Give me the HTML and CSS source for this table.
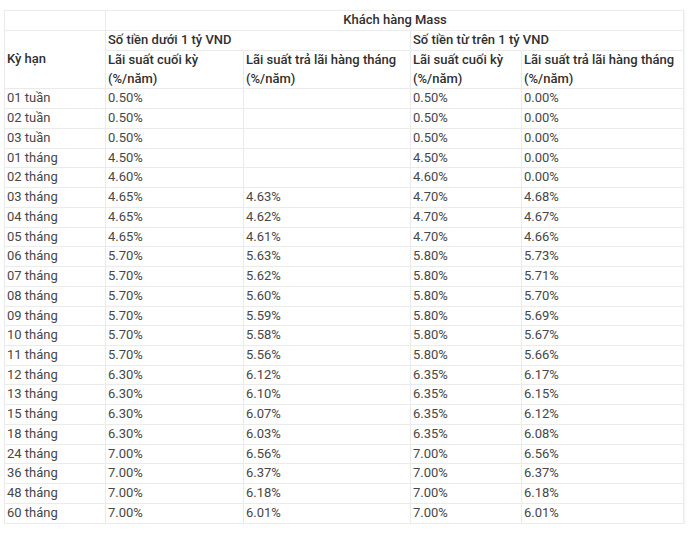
FILE: index.html
```html
<!DOCTYPE html>
<html lang="vi">
<head>
<meta charset="utf-8">
<title>Lãi suất</title>
<link rel="stylesheet" href="styles.css">
</head>
<body>
<table class="rates">
  <colgroup>
    <col class="c1"><col class="c2"><col class="c3"><col class="c4"><col class="c5">
  </colgroup>
  <thead>
    <tr class="h1">
      <th></th>
      <th colspan="4" class="center">Khách hàng Mass</th>
    </tr>
    <tr class="h2">
      <th rowspan="2">Kỳ hạn</th>
      <th colspan="2">Số tiền dưới 1 tỷ VND</th>
      <th colspan="2">Số tiền từ trên 1 tỷ VND</th>
    </tr>
    <tr class="h3">
      <th>Lãi suất cuối kỳ<br>(%/năm)</th>
      <th>Lãi suất trả lãi hàng tháng<br>(%/năm)</th>
      <th>Lãi suất cuối kỳ<br>(%/năm)</th>
      <th>Lãi suất trả lãi hàng tháng<br>(%/năm)</th>
    </tr>
  </thead>
  <tbody>
    <tr><td>01 tuần</td><td>0.50%</td><td></td><td>0.50%</td><td>0.00%</td></tr>
    <tr><td>02 tuần</td><td>0.50%</td><td></td><td>0.50%</td><td>0.00%</td></tr>
    <tr><td>03 tuần</td><td>0.50%</td><td></td><td>0.50%</td><td>0.00%</td></tr>
    <tr><td>01 tháng</td><td>4.50%</td><td></td><td>4.50%</td><td>0.00%</td></tr>
    <tr><td>02 tháng</td><td>4.60%</td><td></td><td>4.60%</td><td>0.00%</td></tr>
    <tr><td>03 tháng</td><td>4.65%</td><td>4.63%</td><td>4.70%</td><td>4.68%</td></tr>
    <tr><td>04 tháng</td><td>4.65%</td><td>4.62%</td><td>4.70%</td><td>4.67%</td></tr>
    <tr><td>05 tháng</td><td>4.65%</td><td>4.61%</td><td>4.70%</td><td>4.66%</td></tr>
    <tr><td>06 tháng</td><td>5.70%</td><td>5.63%</td><td>5.80%</td><td>5.73%</td></tr>
    <tr><td>07 tháng</td><td>5.70%</td><td>5.62%</td><td>5.80%</td><td>5.71%</td></tr>
    <tr><td>08 tháng</td><td>5.70%</td><td>5.60%</td><td>5.80%</td><td>5.70%</td></tr>
    <tr><td>09 tháng</td><td>5.70%</td><td>5.59%</td><td>5.80%</td><td>5.69%</td></tr>
    <tr><td>10 tháng</td><td>5.70%</td><td>5.58%</td><td>5.80%</td><td>5.67%</td></tr>
    <tr><td>11 tháng</td><td>5.70%</td><td>5.56%</td><td>5.80%</td><td>5.66%</td></tr>
    <tr><td>12 tháng</td><td>6.30%</td><td>6.12%</td><td>6.35%</td><td>6.17%</td></tr>
    <tr><td>13 tháng</td><td>6.30%</td><td>6.10%</td><td>6.35%</td><td>6.15%</td></tr>
    <tr><td>15 tháng</td><td>6.30%</td><td>6.07%</td><td>6.35%</td><td>6.12%</td></tr>
    <tr><td>18 tháng</td><td>6.30%</td><td>6.03%</td><td>6.35%</td><td>6.08%</td></tr>
    <tr><td>24 tháng</td><td>7.00%</td><td>6.56%</td><td>7.00%</td><td>6.56%</td></tr>
    <tr><td>36 tháng</td><td>7.00%</td><td>6.37%</td><td>7.00%</td><td>6.37%</td></tr>
    <tr><td>48 tháng</td><td>7.00%</td><td>6.18%</td><td>7.00%</td><td>6.18%</td></tr>
    <tr><td>60 tháng</td><td>7.00%</td><td>6.01%</td><td>7.00%</td><td>6.01%</td></tr>
  </tbody>
</table>
</body>
</html>
```
FILE: styles.css
```css
html, body {
  margin: 0;
  padding: 0;
  background: #ffffff;
}
body {
  padding: 10px 0 0 4px;
  font-family: Roboto, "Liberation Sans", sans-serif;
  font-size: 13px;
  color: #4a4a4a;
}
.rates {
  border-collapse: collapse;
  table-layout: fixed;
  width: 679px;
  box-shadow: 1px 1px 2px rgba(0,0,0,0.06);
}
.c1 { width: 101px; }
.c2 { width: 138px; }
.c3 { width: 167px; }
.c4 { width: 111px; }
.c5 { width: 162px; }
.rates th,
.rates td {
  border: 1px solid #ebebeb;
  padding: 0 1px 0 2px;
  line-height: 18.73px;
  text-align: left;
  vertical-align: middle;
  white-space: nowrap;
}
.rates th {
  font-weight: 500;
  color: #303030;
}
.rates th.center {
  text-align: center;
}
.h1 th, .h2 th {
  height: 19px;
}
.rates td {
  color: #474747;
}
```
